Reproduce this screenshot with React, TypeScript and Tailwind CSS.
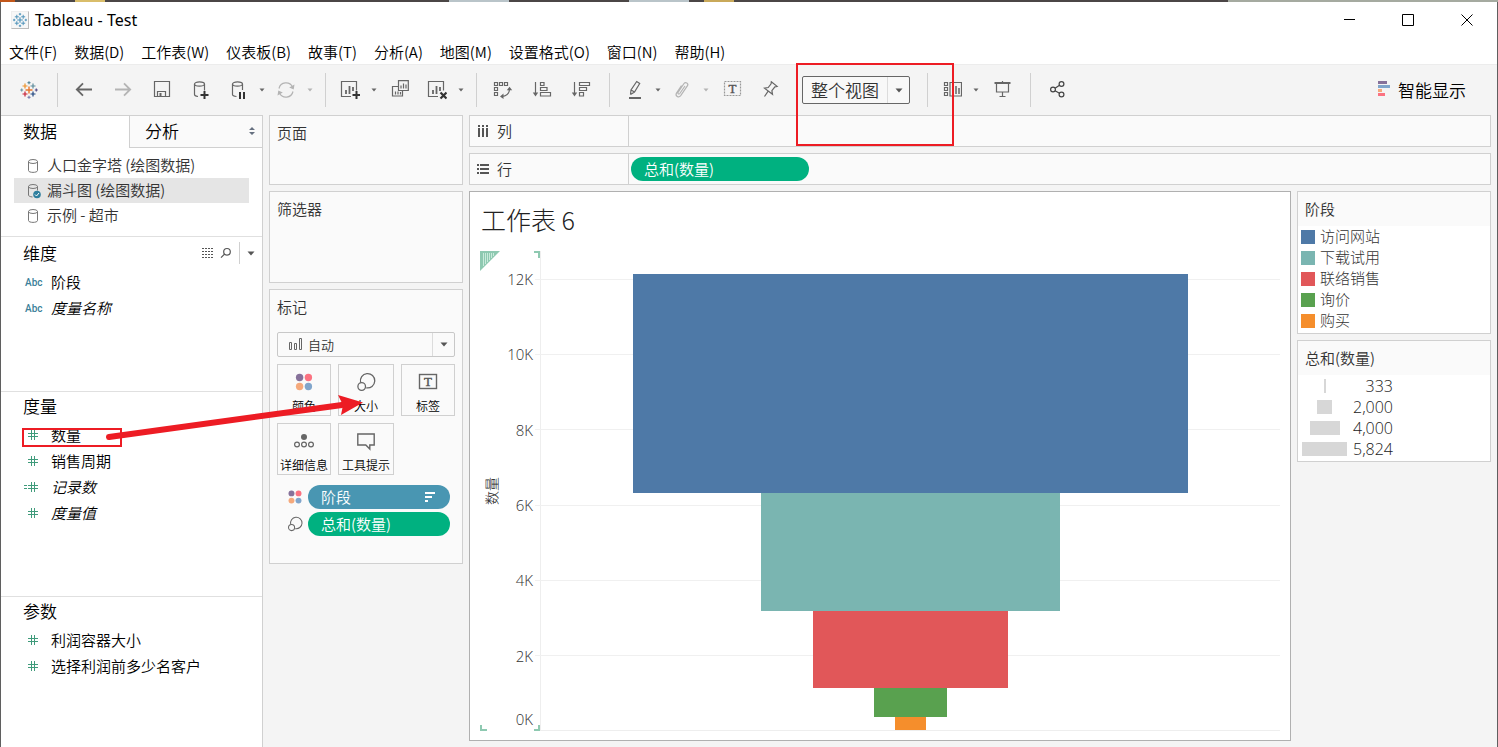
import React from "react";

type Children = { children: React.ReactNode };

const STAGES = [
  { name: "访问网站", value: 5824, color: "#4e79a7" },
  { name: "下载试用", value: 3148, color: "#7ab5b1" },
  { name: "联络销售", value: 2056, color: "#e15759" },
  { name: "询价", value: 776, color: "#59a14f" },
  { name: "购买", value: 333, color: "#f58e2c" },
];

const AXIS_MAX = 12745;
const STAGE_MAX = 5824;
const STAGE_TOTAL = STAGES.reduce((sum, s) => sum + s.value, 0);
const TICKS = [12, 10, 8, 6, 4, 2, 0];
const SIZES = [333, 2000, 4000, 5824];

const MENUS = [
  "文件(F)",
  "数据(D)",
  "工作表(W)",
  "仪表板(B)",
  "故事(T)",
  "分析(A)",
  "地图(M)",
  "设置格式(O)",
  "窗口(N)",
  "帮助(H)",
];

/* ---------- icons ---------- */

const Icon = ({ children, color = "#666" }: Children & { color?: string }) => (
  <svg width="20" height="20" viewBox="0 0 20 20" fill="none" stroke={color} strokeWidth="1.2" className="block shrink-0">
    {children}
  </svg>
);

const LogoIcon = ({ mono = false }: { mono?: boolean }) => {
  const c = (color: string) => (mono ? "#4a90b8" : color);
  return (
    <Icon>
      <path d="M10 6.5v7M6.5 10h7" stroke={c("#e8762d")} strokeWidth="1.4" />
      <path d="M6 3.5v5M3.5 6h5" stroke={c("#eb9129")} strokeWidth="1.2" />
      <path d="M14 3.5v5M11.5 6h5" stroke={c("#5b8a9a")} strokeWidth="1.2" />
      <path d="M6 11.5v5M3.5 14h5" stroke={c("#c72035")} strokeWidth="1.2" />
      <path d="M14 11.5v5M11.5 14h5" stroke={c("#1f447e")} strokeWidth="1.2" />
      <path d="M10 1.2v3M8.5 2.7h3" stroke={c("#5b8a9a")} />
      <path d="M10 15.8v3M8.5 17.3h3" stroke={c("#7e84b0")} />
      <path d="M2.7 8.5v3M1.2 10h3" stroke={c("#7099a6")} />
      <path d="M17.3 8.5v3M15.8 10h3" stroke={c("#59508c")} />
    </Icon>
  );
};

const BackIcon = () => (
  <Icon>
    <path d="M3 9.500h15M9 3.300L2.800 9.500L9 15.700" strokeWidth="1.8" />
  </Icon>
);

const ForwardIcon = () => (
  <Icon color="#b4b4b4">
    <path d="M2 9.500h15M11 3.300l6.200 6.200l-6.200 6.200" strokeWidth="1.8" />
  </Icon>
);

const SaveIcon = () => (
  <Icon>
    <path d="M2.500 1.500h15v15h-15zM5.500 16.500v-5h8v5" />
    <path d="M7.500 13h2v3h-2z" fill="#666" stroke="none" />
  </Icon>
);

const AddDataIcon = () => (
  <Icon>
    <path d="M3.500 4v10.500c0 1.300 1 1.700 3.500 2M13.500 4v6.500" />
    <ellipse cx="8.500" cy="4" rx="5" ry="2.200" />
    <path d="M13.500 11v8M9.500 15h8" stroke="#333" strokeWidth="2" />
  </Icon>
);

const PauseDataIcon = () => (
  <Icon>
    <path d="M4.500 4v10.500c0 1.300 1.500 1.700 4 2M14.500 4v6" />
    <ellipse cx="9.500" cy="4" rx="5" ry="2.200" />
    <path d="M12 12v7M16 12v7" stroke="#333" strokeWidth="2" />
  </Icon>
);

const RefreshIcon = () => (
  <Icon color="#b4b4b4">
    <path d="M3 8.500a7.200 7.200 0 0 1 13.500-1.500M17 11.500a7.200 7.200 0 0 1-13.500 1.500" />
    <path d="M18.500 4.500l-.8 5l-4.500-2zM1.500 15.500l.8-5l4.500 2z" fill="#b4b4b4" stroke="none" />
  </Icon>
);

const NewSheetIcon = () => (
  <Icon>
    <path d="M11 16.500h-9.500v-15h15v9" />
    <path d="M6 14v-4M9.500 14v-8M13 11v-4" strokeWidth="1.800" />
    <path d="M16.500 11v8M12.500 15h8" stroke="#333" strokeWidth="2" />
  </Icon>
);

const DuplicateIcon = () => (
  <Icon>
    <path d="M8.500 .700h9.800v9.800h-9.800zM8.500 6.500h-6v9.500h10v-5.500" />
    <path d="M11 8.500v-3M13.500 8.500v-5M16 8.500v-4M5.500 14.500v-3M8 14.500v-3M10.500 14.500v-2.500" />
  </Icon>
);

const ClearIcon = () => (
  <Icon>
    <path d="M11 16.500h-9.500v-15h15v9" />
    <path d="M6 14v-4M9.500 14v-8M13 11v-4" strokeWidth="1.800" />
    <path d="M13.500 12.500l6 6M19.500 12.500l-6 6" stroke="#333" strokeWidth="2.200" />
  </Icon>
);

const SwapIcon = () => (
  <Icon>
    <path d="M1.500 2.500h3v3h-3zM6.500 2.500h3v3h-3zM11.500 2.500h3v3h-3zM1.500 7.500h3v3h-3zM1.500 12.500h3v3h-3z" />
    <path d="M16.500 9c0 4-3 7-8 7.500" />
    <path d="M13.800 10.200l2.700-3.400l2.700 3.400zM10.500 13.600l-3.500 2.900l3.500 2.600z" fill="#666" stroke="none" />
  </Icon>
);

const SortAscIcon = () => (
  <Icon>
    <path d="M3.500 2v12" />
    <path d="M.8 12.500h5.400l-2.700 4z" fill="#666" stroke="none" />
    <path d="M8.500 2.500h3.500v3h-3.500zM8.500 7.500h6.500v3h-6.500zM8.500 12.500h10v3.500h-10z" />
  </Icon>
);

const SortDescIcon = () => (
  <Icon>
    <path d="M3.500 2v12" />
    <path d="M.8 12.500h5.400l-2.700 4z" fill="#666" stroke="none" />
    <path d="M8.500 2.500h10v3h-10zM8.500 7.500h7v3h-7zM8.500 12.500h4v3.500h-4z" />
  </Icon>
);

const PenIcon = () => (
  <Icon>
    <path d="M6.500 14.500l.5-4.500l5.700-8.500l3 2l-5.200 8.500l-4 2.500M7 10l3.500 2" />
    <path d="M5 18h12" strokeWidth="2" />
  </Icon>
);

const ClipIcon = () => (
  <Icon color="#b4b4b4">
    <path d="M13 6l-5.200 7.500c-.9 1.200-2.600 0-1.800-1.200l6-8.800c1.500-2 4.800-.2 3.500 2.200l-6.800 10c-2 2.500-5.800.3-4.200-2.700l5-7.500" />
  </Icon>
);

const LabelTextIcon = ({ dashed = false }: { dashed?: boolean }) => (
  <Icon>
    {dashed ? (
      <rect x="2.500" y="1.500" width="16" height="14" stroke="#999" strokeDasharray="2 1" />
    ) : (
      <rect x="1.500" y="2.500" width="17" height="14" strokeWidth="1.400" />
    )}
    <text
      x={dashed ? 10.5 : 10}
      y={dashed ? 13 : 14}
      textAnchor="middle"
      fontFamily="'Liberation Serif', serif"
      fontSize="13"
      fill="#555"
      stroke="#555"
      strokeWidth=".4"
    >
      T
    </text>
  </Icon>
);

const PinIcon = () => (
  <Icon>
    <path d="M10.300 1.800l5.800 4.600l-2.200.5l-3 3.700l.6 3.700l-8-6.200l3.700-.6l2.900-3.700zM7 11.300l-3.500 5.200" />
  </Icon>
);

const CardsIcon = () => (
  <Icon>
    <path d="M2.500 2.500h3v3h-3zM2.500 7.500h3v3h-3zM2.500 12.500h3v3h-3z" />
    <path d="M8 2.500h11.500v13.500h-11.500z" />
    <path d="M11 14v-4M14 14v-8M17 14v-6" strokeWidth="1.500" />
  </Icon>
);

const PresentIcon = () => (
  <Icon>
    <path d="M2.500 3h16" strokeWidth="2" />
    <path d="M10.500 1v2M4.500 4v8h12v-8M10.500 12v4.500M7.500 16.500h6" />
  </Icon>
);

const ShareIcon = () => (
  <Icon color="#444">
    <circle cx="6" cy="9.500" r="2.400" />
    <circle cx="14.500" cy="4" r="2.400" />
    <circle cx="14.500" cy="14.500" r="2.400" />
    <path d="M8 8.200l4.500-2.900M8 10.700l4.500 2.500" />
  </Icon>
);

const ColorDots = ({ size = 20 }: { size?: number }) => (
  <svg width={size} height={size} viewBox="0 0 20 20" className="shrink-0">
    <circle cx="5.600" cy="5.500" r="3.700" fill="#86719a" />
    <circle cx="14.400" cy="5.500" r="3.700" fill="#fb7281" />
    <circle cx="5.600" cy="14.500" r="3.700" fill="#f5a97c" />
    <circle cx="14.400" cy="14.500" r="3.700" fill="#80a5cb" />
  </svg>
);

const SizeIcon = ({ size = 20 }: { size?: number }) => (
  <svg width={size} height={size} viewBox="0 0 20 20" fill="none" stroke="#666" strokeWidth="1.300" className="shrink-0">
    <path d="M4.600 10.500a7.200 7.200 0 1 1 5.600 5.300" />
    <circle cx="5.700" cy="14.500" r="3.800" />
  </svg>
);

const DetailIcon = () => (
  <Icon>
    <circle cx="10" cy="6" r="3" fill="#666" stroke="none" />
    <circle cx="3" cy="13.500" r="2.400" />
    <circle cx="10" cy="13.500" r="2.400" />
    <circle cx="17" cy="13.500" r="2.400" />
  </Icon>
);

const TooltipIcon = () => (
  <Icon>
    <path d="M1.800 3h16.400v11h-4.400v4l-4-4h-8z" strokeWidth="1.400" />
  </Icon>
);

const DatabaseIcon = ({ active = false }: { active?: boolean }) => (
  <svg width="14" height="16" viewBox="0 0 14 16" fill="none" stroke="#777" className="shrink-0">
    <ellipse cx="6" cy="3.500" rx="4.500" ry="2" />
    <path d={active ? "M1.500 3.500v8.500c0 1.200 1.500 1.700 4 2M10.500 3.500v4" : "M1.500 3.500v9c0 2.500 9 2.500 9 0v-9"} />
    {active && (
      <>
        <circle cx="10" cy="11.500" r="3.800" fill="#2f7f9f" stroke="none" />
        <path d="M8 11.500l1.500 1.500l2.500-3" stroke="#fff" />
      </>
    )}
  </svg>
);

const NumberIcon = ({ calculated = false }: { calculated?: boolean }) => (
  <svg width="16" height="12" viewBox="0 0 16 12" fill="none" stroke="#3f9b7b" className="shrink-0" shapeRendering="crispEdges">
    <path d="M7.500 1v10M10.500 1v10M4 4.500h10M4 7.500h10" />
    {calculated && <path d="M0 4.500h3M0 7.500h3" />}
  </svg>
);

const Caret = () => (
  <svg width="8" height="5" viewBox="0 0 8 5" className="shrink-0" fill="#555">
    <path d="M.5.500h7l-3.500 4z" />
  </svg>
);

/* ---------- toolbar ---------- */

const Tool = ({ label, children }: Children & { label: string }) => (
  <button aria-label={label} className="flex h-8 w-[39px] shrink-0 items-center justify-center hover:bg-gray-200">
    {children}
  </button>
);

const ToolWithMenu = ({ label, muted = false, children }: Children & { label: string; muted?: boolean }) => (
  <div className="flex shrink-0">
    <button aria-label={label} className="flex h-8 w-9 items-center justify-center hover:bg-gray-200">
      {children}
    </button>
    <button aria-label={`${label}选项`} className="flex h-8 w-3 items-center justify-center hover:bg-gray-200">
      <svg width="6" height="4" viewBox="0 0 6 4" fill={muted ? "#b4b4b4" : "#666"}>
        <path d="M.5.500h5l-2.500 3z" />
      </svg>
    </button>
  </div>
);

const Separator = () => <div className="mr-1.5 ml-[9px] h-[34px] w-px shrink-0 bg-[#d0d0d0]" />;

const Toolbar = () => (
  <div className="flex h-[51px] shrink-0 items-center border-t border-[#ececec] bg-[#f4f4f4] pl-2">
    <Tool label="开始页面">
      <LogoIcon />
    </Tool>
    <Separator />
    <Tool label="撤消">
      <BackIcon />
    </Tool>
    <Tool label="重做">
      <ForwardIcon />
    </Tool>
    <Tool label="保存">
      <SaveIcon />
    </Tool>
    <Tool label="新建数据源">
      <AddDataIcon />
    </Tool>
    <ToolWithMenu label="暂停自动更新">
      <PauseDataIcon />
    </ToolWithMenu>
    <ToolWithMenu label="运行更新" muted>
      <RefreshIcon />
    </ToolWithMenu>
    <Separator />
    <ToolWithMenu label="新建工作表">
      <NewSheetIcon />
    </ToolWithMenu>
    <Tool label="复制">
      <DuplicateIcon />
    </Tool>
    <ToolWithMenu label="清除工作表">
      <ClearIcon />
    </ToolWithMenu>
    <Separator />
    <Tool label="交换行和列">
      <SwapIcon />
    </Tool>
    <Tool label="升序排序">
      <SortAscIcon />
    </Tool>
    <Tool label="降序排序">
      <SortDescIcon />
    </Tool>
    <Separator />
    <ToolWithMenu label="突出显示">
      <PenIcon />
    </ToolWithMenu>
    <ToolWithMenu label="组成员" muted>
      <ClipIcon />
    </ToolWithMenu>
    <Tool label="显示标记标签">
      <LabelTextIcon dashed />
    </Tool>
    <Tool label="固定轴">
      <PinIcon />
    </Tool>
    <div className="relative mr-2 ml-3 h-7 w-[108px] shrink-0 rounded-xs border border-[#666] bg-[#f8f8f8]">
      <select
        aria-label="适合"
        defaultValue="entire"
        className="h-full w-full appearance-none bg-transparent pl-2 text-[17px] leading-6 text-[#333] outline-none"
      >
        <option value="entire">整个视图</option>
        <option value="standard">标准</option>
        <option value="width">适合宽度</option>
        <option value="height">适合高度</option>
      </select>
      <span className="pointer-events-none absolute inset-y-0 right-0 flex w-[22px] items-center justify-center border-l border-[#dcdcdc]">
        <Caret />
      </span>
    </div>
    <Separator />
    <ToolWithMenu label="显示/隐藏卡">
      <CardsIcon />
    </ToolWithMenu>
    <Tool label="演示模式">
      <PresentIcon />
    </Tool>
    <Separator />
    <Tool label="共享工作簿">
      <ShareIcon />
    </Tool>
    <button className="mr-[31px] ml-auto flex shrink-0 items-center gap-1.5 text-[17px] text-black">
      <svg width="14" height="18" viewBox="0 0 14 18">
        <path d="M0 0h9v3h-9z" fill="#86719a" />
        <path d="M0 4h12v3h-12z" fill="#80a5cb" />
        <path d="M0 8h4v3h-4z" fill="#f5a97c" />
        <path d="M0 12h7v3h-7z" fill="#fb7281" />
      </svg>
      智能显示
    </button>
  </div>
);

/* ---------- data pane ---------- */

const Field = ({ name, type, italic = false }: { name: string; type: "text" | "number" | "calc"; italic?: boolean }) => (
  <li className="flex h-[26px] items-center text-[15px] text-black">
    <span className="flex w-[50px] shrink-0 pl-[23px]">
      {type === "text" ? (
        <span className="pl-px font-[Roboto,sans-serif] text-[10px] font-medium text-[#3b7f99]">Abc</span>
      ) : (
        <NumberIcon calculated={type === "calc"} />
      )}
    </span>
    <span className={italic ? "italic" : ""}>{name}</span>
  </li>
);

const DataPane = () => (
  <aside className="flex w-[262px] shrink-0 flex-col border-t border-r border-[#d0d0d0] bg-white">
    <div className="flex h-8 shrink-0 text-[17px] text-black">
      <button className="w-32 pb-0.5 pl-[22px] text-left">数据</button>
      <button className="flex flex-1 items-center justify-between border-b border-l border-[#d0d0d0] bg-[#fafafa] pr-[7px] pb-px pl-[15px]">
        分析
        <svg width="6" height="8" viewBox="0 0 6 8" fill="#667080">
          <path d="M0 3l3-3l3 3zM0 5l3 3l3-3z" />
        </svg>
      </button>
    </div>

    <ul className="h-[88px] shrink-0 pt-[5px] pr-[13px] pl-[13px] text-[15px] text-[#333]">
      <li className="flex h-[25px] items-center gap-1.5 pl-[13px]">
        <DatabaseIcon />
        人口金字塔 (绘图数据)
      </li>
      <li className="flex h-[25px] items-center gap-1.5 bg-[#e5e5e5] pl-[13px]">
        <DatabaseIcon active />
        漏斗图 (绘图数据)
      </li>
      <li className="flex h-[25px] items-center gap-1.5 pl-[13px]">
        <DatabaseIcon />
        示例 - 超市
      </li>
    </ul>

    <section className="h-[155px] shrink-0 border-t border-[#e0e0e0]">
      <div className="flex h-8 items-center pr-[7px] pl-[22px]">
        <h2 className="flex-1 text-[17px] text-black">维度</h2>
        <button aria-label="查看数据" className="mr-1.5">
          <svg width="12" height="10" viewBox="0 0 12 10" stroke="#555" strokeDasharray="2 1" shapeRendering="crispEdges">
            <path d="M0 .5h12M0 3.500h12M0 6.500h12M0 9.500h12" />
          </svg>
        </button>
        <button aria-label="查找字段" className="mr-[7px]">
          <svg width="12" height="12" viewBox="0 0 12 12" fill="none" stroke="#555" strokeWidth="1.200">
            <circle cx="7" cy="4.800" r="3.300" />
            <path d="M4.500 7.200l-3.500 3.500" />
          </svg>
        </button>
        <div className="mr-[7px] h-[22px] w-px bg-[#d0d0d0]" />
        <button aria-label="数据窗格选项">
          <Caret />
        </button>
      </div>
      <ul>
        <Field name="阶段" type="text" />
        <Field name="度量名称" type="text" italic />
      </ul>
    </section>

    <section className="h-[205px] shrink-0 border-t border-[#e0e0e0]">
      <h2 className="h-[30px] pl-[22px] text-[17px] leading-7 text-black">度量</h2>
      <ul>
        <Field name="数量" type="number" />
        <Field name="销售周期" type="number" />
        <Field name="记录数" type="calc" italic />
        <Field name="度量值" type="number" italic />
      </ul>
    </section>

    <section className="flex-1 border-t border-[#e0e0e0]">
      <h2 className="h-[30px] pl-[22px] text-[17px] leading-7 text-black">参数</h2>
      <ul>
        <Field name="利润容器大小" type="number" />
        <Field name="选择利润前多少名客户" type="number" />
      </ul>
    </section>
  </aside>
);

/* ---------- cards ---------- */

const MarkButton = ({ label, children }: Children & { label: string }) => (
  <button className="flex h-[52px] flex-col items-center justify-between border border-[#d0d0d0] pt-[7px] text-xs text-black hover:bg-gray-100">
    {children}
    <span className="leading-[18px] whitespace-nowrap">{label}</span>
  </button>
);

const MarksCard = () => (
  <section className="h-[275px] border border-[#d0d0d0] bg-[#fafafa] px-[7px] text-[15px] text-[#333]">
    <h2 className="h-[42px] leading-[33px]">标记</h2>
    <div className="relative h-[25px] rounded-xs border border-[#c8c8c8] bg-[#fafafa]">
      <svg width="14" height="12" viewBox="0 0 14 12" fill="none" stroke="#666" className="pointer-events-none absolute top-[5px] left-[11px]">
        <path d="M.5 4.500h2v7h-2zM5.500 5.500h2v6h-2zM10.500.500h2v11h-2z" />
      </svg>
      <select
        aria-label="标记类型"
        defaultValue="auto"
        className="h-full w-full appearance-none bg-transparent pl-[30px] text-[13px] leading-5 text-[#333] outline-none"
      >
        <option value="auto">自动</option>
        <option value="bar">条形图</option>
        <option value="line">线</option>
      </select>
      <span className="pointer-events-none absolute inset-y-0 right-0 flex w-[22px] items-center justify-center border-l border-[#dcdcdc]">
        <Caret />
      </span>
    </div>
    <div className="mt-[7px] grid grid-cols-[54fr_56fr_54fr] gap-[7px]">
      <MarkButton label="颜色">
        <ColorDots />
      </MarkButton>
      <MarkButton label="大小">
        <SizeIcon />
      </MarkButton>
      <MarkButton label="标签">
        <LabelTextIcon />
      </MarkButton>
      <MarkButton label="详细信息">
        <DetailIcon />
      </MarkButton>
      <MarkButton label="工具提示">
        <TooltipIcon />
      </MarkButton>
    </div>
    <div className="mt-2.5 flex flex-col gap-[3px] pr-[5px] pl-2.5 text-white">
      <div className="flex items-center gap-[5px]">
        <ColorDots size={16} />
        <button className="flex h-6 flex-1 items-center justify-between rounded-full bg-[#4996b2] pr-3.5 pl-[13px]">
          阶段
          <svg width="11" height="10" viewBox="0 0 11 10" fill="#fff">
            <path d="M0 0h10v2h-10zM0 4h7v2h-7zM0 8h3v2h-3z" />
          </svg>
        </button>
      </div>
      <div className="flex items-center gap-[5px]">
        <SizeIcon size={16} />
        <button className="h-6 flex-1 rounded-full bg-[#00b180] pl-[13px] text-left">总和(数量)</button>
      </div>
    </div>
  </section>
);

const Shelf = ({ label, icon, children }: { label: string; icon: React.ReactNode; children?: React.ReactNode }) => (
  <div className="flex h-8 shrink-0 border border-[#d0d0d0] bg-[#fafafa] text-[15px] text-[#333]">
    <div className="flex w-[159px] shrink-0 items-center gap-2 border-r border-[#d0d0d0] pl-[7px]">
      {icon}
      {label}
    </div>
    <div className="flex flex-1 items-center pl-0.5">{children}</div>
  </div>
);

/* ---------- worksheet ---------- */

const Funnel = () => (
  <div className="flex flex-1">
    <div className="relative flex w-[60px] shrink-0 items-center">
      <svg width="20" height="20" viewBox="0 0 20 20" className="absolute top-0 left-0">
        <path d="M0 0h20l-20 20z" fill="#8ec9b1" />
        <path d="M3.500 2v13M5.500 2v11M7.500 2v9M9.500 2v7M11.500 2v5M13.500 2v3" stroke="#c9eadb" />
      </svg>
      <div className="absolute top-0 right-0 h-[7px] w-1.5 border-t-2 border-r-2 border-[#8ec9b1]" />
      <div className="absolute right-0 bottom-0 h-1.5 w-1.5 border-r-2 border-b-2 border-[#8ec9b1]" />
      <div className="absolute bottom-0 left-0 h-1.5 w-[7px] border-b-2 border-l-2 border-[#8ec9b1]" />
      <div className="flex w-[22px] justify-center">
        <span className="-rotate-90 text-sm font-light whitespace-nowrap text-[#222]">数量</span>
      </div>
      {TICKS.map((t) => (
        <span
          key={t}
          className={`absolute right-[7px] font-['Open_Sans','Noto_Sans',sans-serif] text-[15px] leading-5 font-light text-[#333] ${
            t === 0 ? "pb-0.5" : "translate-y-1/2"
          }`}
          style={{ bottom: `${((t * 1000) / AXIS_MAX) * 100}%` }}
        >
          {t}K
        </span>
      ))}
    </div>
    <div className="relative flex flex-1 flex-col items-center border-b border-l border-[#eeeeee]">
      {TICKS.filter((t) => t > 0).map((t) => (
        <div
          key={t}
          className="absolute right-0 -left-1.5 -mb-px h-px bg-[#f0f0f0]"
          style={{ bottom: `${((t * 1000) / AXIS_MAX) * 100}%` }}
        />
      ))}
      <div style={{ flexGrow: AXIS_MAX - STAGE_TOTAL }} />
      {STAGES.map((s) => (
        <div
          key={s.name}
          title={s.name}
          className="relative"
          style={{ flexGrow: s.value, width: `${(s.value / STAGE_MAX) * 75}%`, backgroundColor: s.color }}
        />
      ))}
    </div>
  </div>
);

const Legends = () => (
  <div className="flex w-[194px] shrink-0 flex-col gap-1.5">
    <section className="border border-[#d0d0d0] bg-white pb-0.5">
      <h3 className="bg-[#fafafa] pl-[7px] text-[15px] leading-[34px] text-[#333]">阶段</h3>
      <ul>
        {STAGES.map((s) => (
          <li key={s.name} className="flex h-[21px] items-center gap-[5px] pl-[3px] text-[15px] font-light text-[#333]">
            <span className="h-3.5 w-3.5" style={{ backgroundColor: s.color }} />
            {s.name}
          </li>
        ))}
      </ul>
    </section>
    <section className="border border-[#d0d0d0] bg-white pb-0.5">
      <h3 className="bg-[#fafafa] pl-[7px] text-[15px] leading-[34px] text-[#333]">总和(数量)</h3>
      <ul className="font-['Open_Sans','Noto_Sans',sans-serif] text-base font-light text-[#222]">
        {SIZES.map((v) => (
          <li key={v} className="flex h-[21px] items-center pl-1">
            <span className="flex w-[45px] justify-center">
              <span className="h-3.5 bg-[#d7d7d7]" style={{ width: Math.floor((v / STAGE_MAX) * 45) }} />
            </span>
            <span className="w-[46px] text-right">{v.toLocaleString("en-US")}</span>
          </li>
        ))}
      </ul>
    </section>
  </div>
);

/* ---------- mark-up drawn over the window ---------- */

const Annotations = () => (
  <svg
    width="960"
    height="460"
    viewBox="0 0 960 460"
    fill="none"
    stroke="#ed1c24"
    className="pointer-events-none absolute top-0 left-0"
  >
    <rect x="797" y="64" width="156" height="81" strokeWidth="2" />
    <rect x="23" y="429" width="98" height="17" strokeWidth="2" />
    <path d="M109 437L342 405" strokeWidth="6" strokeLinecap="round" />
    <path d="M338 395l25 7.500l-22 12.500l2-10z" fill="#ed1c24" stroke="none" />
  </svg>
);

const App = () => (
  <div className="relative flex min-h-screen flex-col bg-[#f4f4f4] font-['Noto_Sans_CJK_SC',sans-serif] font-[350]">
    <div className="flex h-0.5 shrink-0 bg-[#4b4646]">
      <div className="w-[1%] bg-[#c2571a]" />
      <div className="ml-[4%] w-[2%] bg-[#d9bd6a]" />
      <div className="ml-[23%] w-[4%] bg-[#b9c4c9]" />
      <div className="ml-[8%] w-[4%] bg-[#b9c4c9]" />
      <div className="ml-[1%] w-[2%] bg-[#c9a95a]" />
      <div className="ml-auto w-[18%] bg-[#a5aaa0]" />
    </div>
    <div className="flex flex-1 flex-col border-x border-[#5f5f5f]">
      <header className="shrink-0 bg-white text-[15px] text-black">
        <div className="flex h-9 items-center">
          <div className="ml-2.5 flex items-center gap-1.5 font-['Noto_Sans','Open_Sans',sans-serif] text-base font-normal">
            <span className="border border-t-[#eee] border-r-[#bbb] border-b-[#bbb] border-l-[#eee] bg-[#f7f7f7]">
              <svg width="16" height="16" viewBox="0 0 20 20">
                <LogoIcon mono />
              </svg>
            </span>
            Tableau - Test
          </div>
          <div className="ml-auto flex">
            <button aria-label="最小化" className="flex h-9 w-[58px] items-center justify-center">
              <svg width="12" height="12" viewBox="0 0 12 12" stroke="#000">
                <path d="M0 5.500h11" />
              </svg>
            </button>
            <button aria-label="最大化" className="flex h-9 w-[58px] items-center justify-center">
              <svg width="12" height="12" viewBox="0 0 12 12" stroke="#000" fill="none">
                <path d="M.5.500h11v11h-11z" />
              </svg>
            </button>
            <button aria-label="关闭" className="flex h-9 w-[60px] items-center justify-center">
              <svg width="12" height="12" viewBox="0 0 12 12" stroke="#000">
                <path d="M.5.500l11 11M11.500.500l-11 11" />
              </svg>
            </button>
          </div>
        </div>
        <nav className="mt-0.5 flex h-6 items-center gap-[17px] pl-2">
          {MENUS.map((m) => (
            <button key={m} className="shrink-0 leading-6">
              {m}
            </button>
          ))}
        </nav>
      </header>

      <Toolbar />

      <div className="flex flex-1 gap-1.5">
        <DataPane />

        <div className="flex w-[194px] shrink-0 flex-col gap-1.5">
          <section className="h-[70px] border border-[#d0d0d0] bg-[#fafafa] pl-[7px] text-[15px] leading-[33px] text-[#333]">
            <h2>页面</h2>
          </section>
          <section className="h-[92px] border border-[#d0d0d0] bg-[#fafafa] pl-[7px] text-[15px] leading-[33px] text-[#333]">
            <h2>筛选器</h2>
          </section>
          <MarksCard />
        </div>

        <main className="flex min-w-0 flex-1 flex-col gap-1.5 pr-1.5 pb-1.5">
          <Shelf
            label="列"
            icon={
              <svg width="12" height="12" viewBox="0 0 12 12" fill="#555">
                <path d="M1 0h2v2h-2zM5 0h2v2h-2zM9 0h2v2h-2zM1 3h2v9h-2zM5 3h2v9h-2zM9 3h2v9h-2z" />
              </svg>
            }
          />
          <Shelf
            label="行"
            icon={
              <svg width="12" height="12" viewBox="0 0 12 12" fill="#555">
                <path d="M0 1h2v2h-2zM0 5h2v2h-2zM0 9h2v2h-2zM3 1h9v2h-9zM3 5h9v2h-9zM3 9h9v2h-9z" />
              </svg>
            }
          >
            <button className="h-6 w-[178px] rounded-full bg-[#00b180] pl-[13px] text-left text-white">总和(数量)</button>
          </Shelf>
          <div className="flex flex-1 gap-1.5">
            <section className="flex min-w-0 flex-1 flex-col border border-[#b0b0b0] bg-white px-2.5 pb-[9px]">
              <h1 className="h-[59px] pl-px text-[25px] leading-[55px] font-light text-[#222]">工作表 6</h1>
              <Funnel />
            </section>
            <Legends />
          </div>
        </main>
      </div>
    </div>
    <Annotations />
  </div>
);

export default App;
